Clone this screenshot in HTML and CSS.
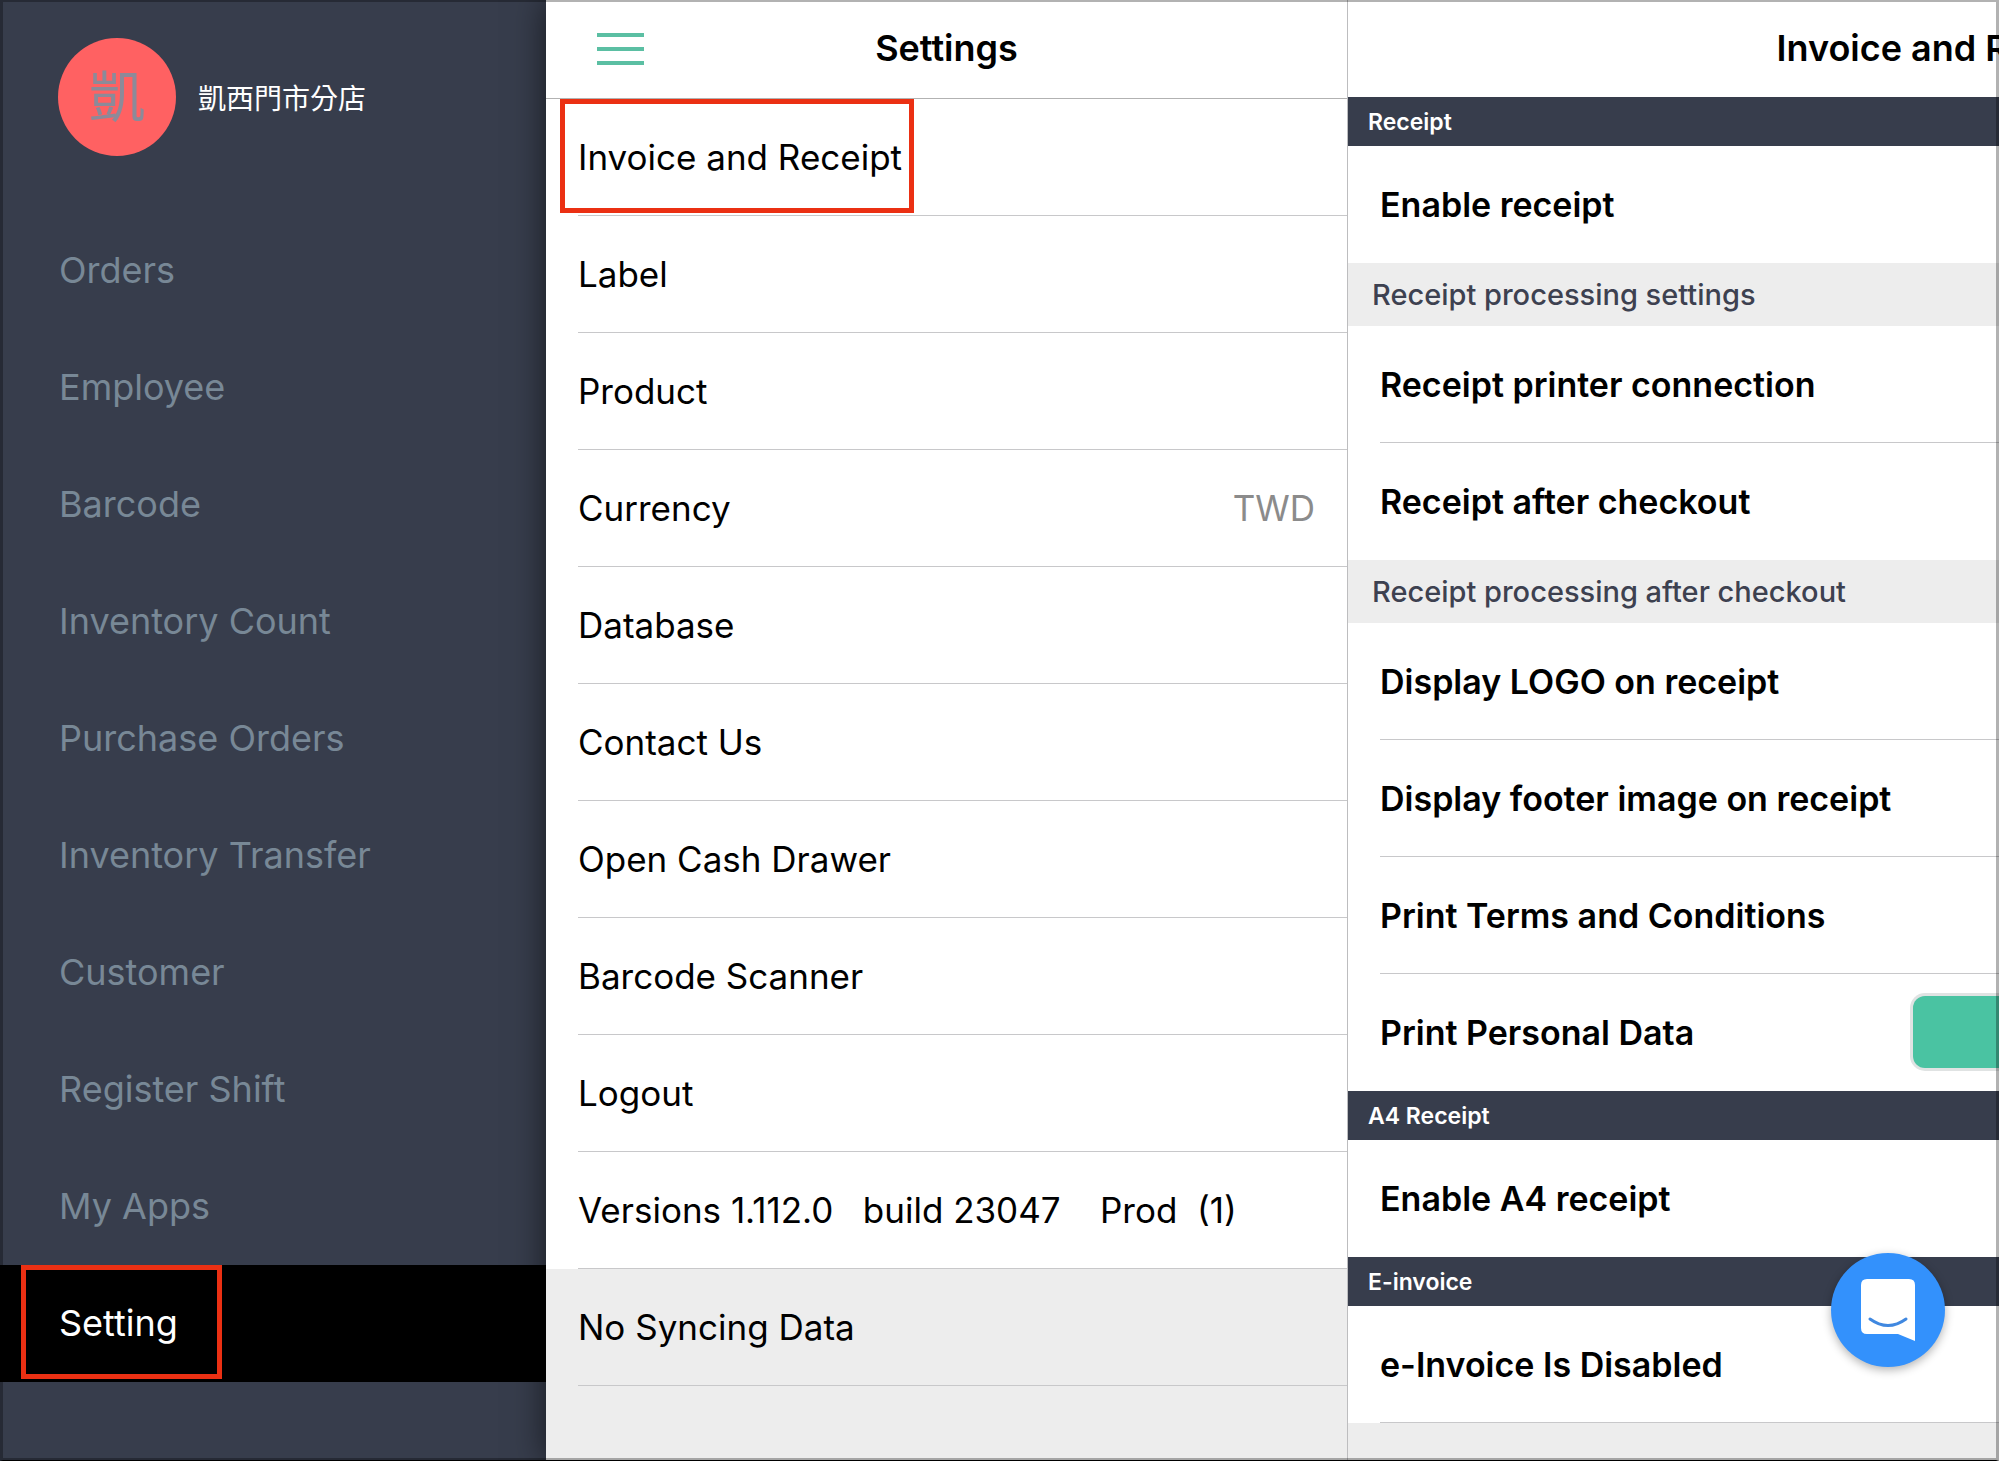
FILE: index.html
```html
<!DOCTYPE html>
<html lang="en">
<head>
<meta charset="utf-8">
<meta name="viewport" content="width=device-width, initial-scale=1">
<title>Settings</title>
<link rel="stylesheet" href="styles.css">
</head>
<body>
<div class="app">
  <aside class="drawer">
    <div class="store">
      <span class="avatar" lang="zh-Hant">凱</span>
      <span class="store-name" lang="zh-Hant">凱西門市分店</span>
    </div>
    <nav class="menu">
      <a class="menu-item" href="#">Orders</a>
      <a class="menu-item" href="#">Employee</a>
      <a class="menu-item" href="#">Barcode</a>
      <a class="menu-item" href="#">Inventory Count</a>
      <a class="menu-item" href="#">Purchase Orders</a>
      <a class="menu-item" href="#">Inventory Transfer</a>
      <a class="menu-item" href="#">Customer</a>
      <a class="menu-item" href="#">Register Shift</a>
      <a class="menu-item" href="#">My Apps</a>
      <a class="menu-item menu-item-active" href="#" aria-current="page">Setting</a>
    </nav>
  </aside>

  <main class="shell">
    <section class="list-pane">
      <header class="bar">
        <button class="menu-button" type="button" aria-label="Menu"><span></span><span></span><span></span></button>
        <h1 class="title">Settings</h1>
      </header>
      <ul class="list">
        <li class="cell cell-marked"><a class="cell-link" href="#">Invoice and Receipt</a></li>
        <li class="cell"><a class="cell-link" href="#">Label</a></li>
        <li class="cell"><a class="cell-link" href="#">Product</a></li>
        <li class="cell"><a class="cell-link" href="#">Currency<span class="value">TWD</span></a></li>
        <li class="cell"><a class="cell-link" href="#">Database</a></li>
        <li class="cell"><a class="cell-link" href="#">Contact Us</a></li>
        <li class="cell"><a class="cell-link" href="#">Open Cash Drawer</a></li>
        <li class="cell"><a class="cell-link" href="#">Barcode Scanner</a></li>
        <li class="cell"><a class="cell-link" href="#">Logout</a></li>
        <li class="cell"><a class="cell-link" href="#">Versions 1.112.0   build 23047    Prod  (1)</a></li>
        <li class="cell cell-muted"><a class="cell-link" href="#">No Syncing Data</a></li>
      </ul>
    </section>

    <section class="detail-pane">
      <header class="bar">
        <h2 class="title">Invoice and Receipt</h2>
      </header>
      <h3 class="section">Receipt</h3>
      <div class="option option-last"><div class="option-body">Enable receipt</div></div>
      <h4 class="subsection">Receipt processing settings</h4>
      <div class="option"><div class="option-body">Receipt printer connection</div></div>
      <div class="option option-last"><div class="option-body">Receipt after checkout</div></div>
      <h4 class="subsection">Receipt processing after checkout</h4>
      <div class="option"><div class="option-body">Display LOGO on receipt</div></div>
      <div class="option"><div class="option-body">Display footer image on receipt</div></div>
      <div class="option"><div class="option-body">Print Terms and Conditions</div></div>
      <div class="option option-last">
        <div class="option-body">
          <span id="personal-data">Print Personal Data</span>
          <button class="toggle" type="button" aria-labelledby="personal-data"></button>
        </div>
      </div>
      <h3 class="section">A4 Receipt</h3>
      <div class="option option-last"><div class="option-body">Enable A4 receipt</div></div>
      <h3 class="section">E-invoice</h3>
      <div class="option"><div class="option-body">e-Invoice Is Disabled</div></div>
    </section>
  </main>
</div>

<button class="chat" type="button" aria-label="Chat">
  <svg width="54" height="62" viewBox="0 0 54 62" aria-hidden="true">
    <path d="M6 0H48Q54 0 54 6V62L37 55H6Q0 55 0 49V6Q0 0 6 0Z" fill="#fff"/>
    <path d="M9 40Q27 53 45 40" fill="none" stroke="#4088e0" stroke-width="3" stroke-linecap="round"/>
  </svg>
</button>
</body>
</html>
```
FILE: styles.css
```css
*,
*::before,
*::after {
  box-sizing: border-box;
}

body {
  margin: 0;
  overflow: hidden;
  background: #373d4c;
  color: #000;
  font-family: Inter, "Noto Sans CJK TC", sans-serif;
}

/* Thin shaded edge round the whole window */
body::after {
  content: "";
  position: fixed;
  inset: 0;
  border: 2px solid rgba(0, 0, 0, 0.3);
  border-right-width: 3px;
  border-left-width: 3px;
  border-bottom: 1px solid #000;
  box-shadow: inset 0 -2px rgba(0, 0, 0, 0.3);
  pointer-events: none;
  z-index: 3;
}

a {
  color: inherit;
  text-decoration: none;
}

button {
  padding: 0;
  border: 0;
  font: inherit;
}

.app {
  display: flex;
  min-height: 100vh;
}

/* Drawer */
.drawer {
  flex: 0 0 546px;
  background: #373d4c;
}

.store {
  display: flex;
  align-items: center;
  gap: 22px;
  height: 212px;
  padding: 0 58px 18px;
}

.avatar {
  display: grid;
  place-items: center;
  width: 118px;
  height: 118px;
  border-radius: 50%;
  background: #ff6162;
  color: #8c8a99;
  font-size: 56px;
  line-height: 64px;
}

.store-name {
  color: #fff;
  font-size: 28px;
}

.menu-item {
  position: relative;
  display: flex;
  align-items: center;
  height: 117px;
  padding: 0 0 2px 59px;
  color: #788896;
  font-size: 36px;
}

.menu-item-active {
  background: #000;
  color: #fff;
}

.menu-item-active::after,
.cell-marked::after {
  content: "";
  position: absolute;
  top: 0;
  height: 114px;
  border: 5px solid #eb3013;
}

.menu-item-active::after {
  left: 21px;
  width: 201px;
}

/* Content slides right as a full-width sheet when the drawer is open */
.shell {
  display: flex;
  flex: 0 0 100vw;
  z-index: 1;
  background: #ededed;
  box-shadow: 0 0 32px rgba(0, 0, 0, 0.6);
}

.list-pane {
  flex: 0 0 802px;
  border-right: 1px solid #bdbdbf;
}

.detail-pane {
  flex: 1;
}

.bar {
  position: relative;
  display: grid;
  place-items: center;
  height: 97px;
  background: #fff;
}

.list-pane .bar {
  height: 99px;
  border-bottom: 1px solid #b2b2b2;
}

.title {
  margin: 0;
  padding-bottom: 2px;
  font-size: 36px;
  font-weight: 600;
}

.menu-button {
  position: absolute;
  top: 33px;
  left: 51px;
  display: grid;
  gap: 10px;
  width: 47px;
  background: none;
}

.menu-button span {
  height: 4px;
  background: #5bbfa3;
}

.list {
  margin: 0;
  padding: 0;
  list-style: none;
}

.cell {
  position: relative;
  padding-left: 32px;
  background: #fff;
}

.cell-marked::after {
  left: 14px;
  width: 354px;
}

.cell-link {
  display: flex;
  align-items: center;
  justify-content: space-between;
  height: 117px;
  padding-right: 32px;
  border-bottom: 1px solid #c8c8ca;
  font-size: 35px;
  white-space: pre;
}

.cell-muted {
  background: #ededed;
}

.value {
  color: #8b8b8b;
}

.section,
.subsection {
  display: flex;
  align-items: center;
  margin: 0;
}

.section {
  height: 49px;
  padding-left: 20px;
  background: #373d4c;
  color: #fff;
  font-size: 23px;
  font-weight: 600;
}

.subsection {
  height: 63px;
  padding-left: 24px;
  background: #ededed;
  color: #3d4150;
  font-size: 29px;
  font-weight: 500;
}

.option {
  padding-left: 32px;
  background: #fff;
}

.option-body {
  display: flex;
  align-items: center;
  justify-content: space-between;
  height: 117px;
  padding-right: 32px;
  border-bottom: 1px solid #c8c8ca;
  font-size: 34px;
  font-weight: 600;
}

.option-last .option-body {
  border-bottom-color: transparent;
}

.toggle {
  width: 600px;
  height: 72px;
  border-radius: 12px;
  background: #4ac3a2;
  box-shadow: 0 0 0 3px #e0e3e3;
}

.chat {
  position: fixed;
  right: 54px;
  bottom: 94px;
  display: grid;
  place-items: center;
  width: 114px;
  height: 114px;
  border-radius: 50%;
  background: #3391fc;
  box-shadow: 0 3px 10px rgba(0, 0, 0, 0.3);
  z-index: 2;
}
```
